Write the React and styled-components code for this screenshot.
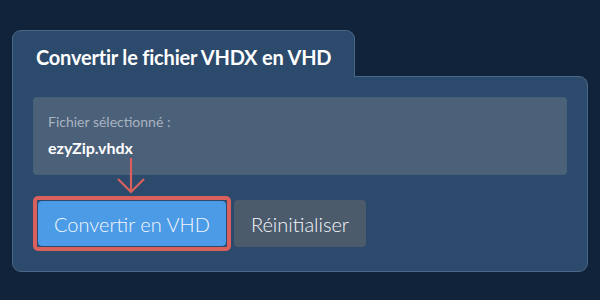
import React from 'react';
import styled, { createGlobalStyle } from 'styled-components';

const GlobalStyle = createGlobalStyle`
  html, body {
    margin: 0;
    padding: 0;
    background: #11233a;
  }

  body {
    font-family: Lato, "Noto Sans", sans-serif;
  }

  * {
    box-sizing: border-box;
  }
`;

const Page = styled.div`
  width: 600px;
  height: 300px;
  padding: 30px 12px 0;
  background: #11233a;
`;

const Tab = styled.div`
  position: relative;
  z-index: 1;
  width: 343px;
  height: 47px;
  margin-bottom: -1px;
  padding: 14px 0 0 23px;
  border: 1px solid #4a6787;
  border-bottom: none;
  border-radius: 9px 9px 0 0;
  background: #2c4a6b;
`;

const Title = styled.h2`
  margin: 0;
  font-size: 20px;
  line-height: 24px;
  font-weight: 700;
  letter-spacing: -0.2px;
  color: #ffffff;
`;

const Panel = styled.div`
  display: flex;
  flex-direction: column;
  gap: 21px;
  width: 576px;
  padding: 20px;
  border: 1px solid #4a6787;
  border-radius: 0 9px 9px 9px;
  background: #2c4a6b;
`;

const FileBox = styled.div`
  height: 78px;
  padding: 16px 15px 0;
  border-radius: 4px;
  background: #4b6079;
`;

const FileLabel = styled.div`
  font-size: 14px;
  line-height: 18px;
  color: #a9b4c1;
`;

const FileName = styled.div`
  margin-top: 7px;
  font-size: 16px;
  line-height: 20px;
  font-weight: 700;
  color: #ffffff;
`;

const Actions = styled.div`
  position: relative;
  display: flex;
  align-items: center;
  gap: 3px;
`;

const Highlight = styled.div`
  display: flex;
  padding: 1px;
  border: 4px solid #d9605c;
  border-radius: 5px;
`;

const Button = styled.button`
  height: ${(p) => p.$height}px;
  padding: 0 ${(p) => p.$pad}px;
  border: none;
  border-radius: 4px;
  font-family: Lato, "Noto Sans", sans-serif;
  font-size: 20px;
  font-weight: 300;
  color: #f4f7fb;
  background: ${(p) => p.$bg};
  cursor: pointer;
`;

const Arrow = styled.svg`
  position: absolute;
  left: 85px;
  top: -39px;
  overflow: visible;
`;

const App = () => (
  <>
    <GlobalStyle />
    <Page>
      <Tab>
        <Title>Convertir le fichier VHDX en VHD</Title>
      </Tab>
      <Panel>
        <FileBox>
          <FileLabel>Fichier sélectionné :</FileLabel>
          <FileName>ezyZip.vhdx</FileName>
        </FileBox>
        <Actions>
          <Highlight>
            <Button $bg="#4c9be6" $pad={16} $height={45}>Convertir en VHD</Button>
          </Highlight>
          <Button $bg="#4b5b6c" $pad={17} $height={47}>Réinitialiser</Button>
          <Arrow width="30" height="40" viewBox="0 0 30 40">
            <path d="M13 1 V35" stroke="#d9605c" strokeWidth="2.2" fill="none" />
            <path d="M0 22 L13 35 L26 22" stroke="#d9605c" strokeWidth="2.2" fill="none" />
          </Arrow>
        </Actions>
      </Panel>
    </Page>
  </>
);

export default App;
